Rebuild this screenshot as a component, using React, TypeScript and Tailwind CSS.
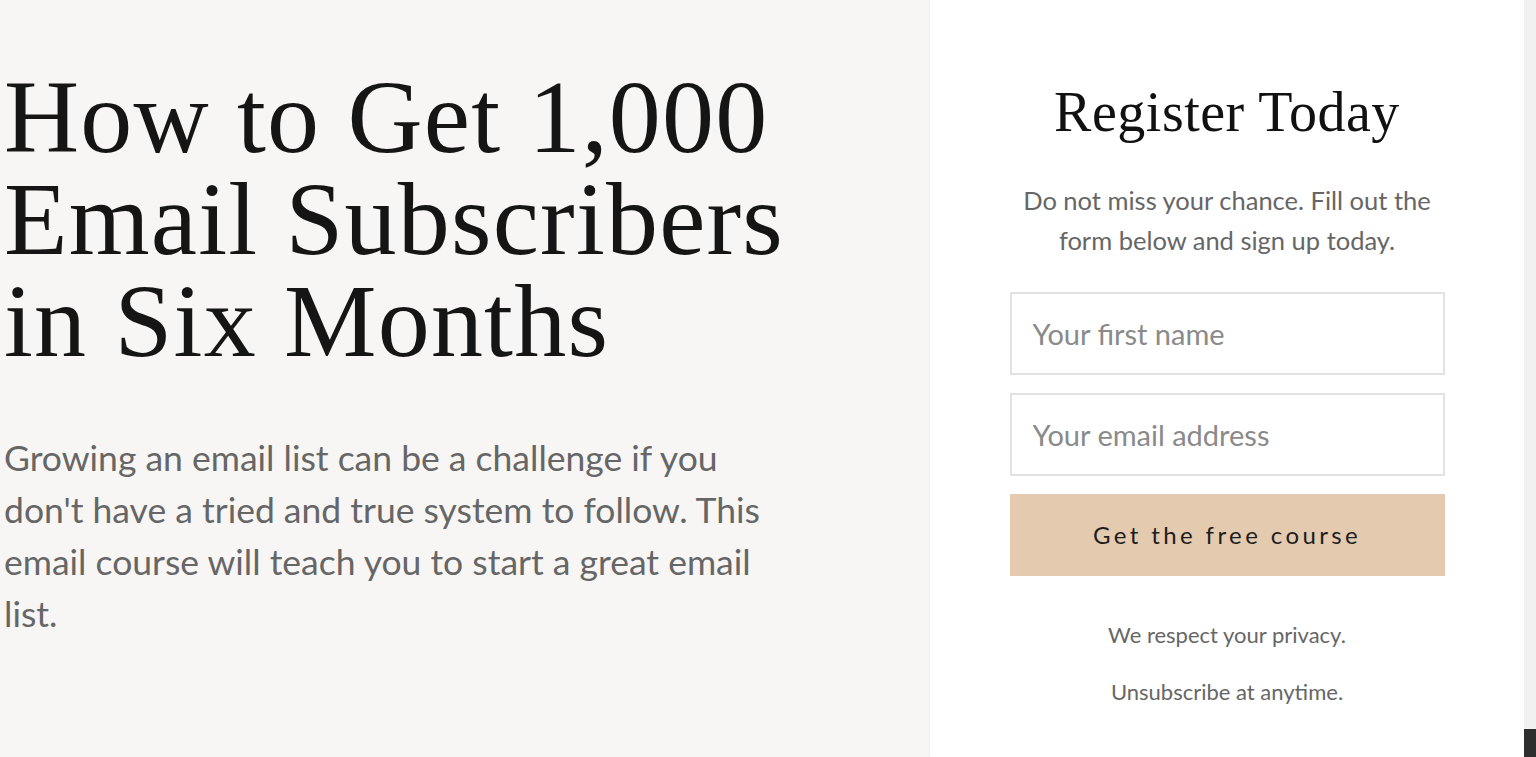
import React from "react";

const serif = { fontFamily: '"Liberation Serif", "Times New Roman", serif' };

export default function App() {
  return (
    <div className="flex h-[757px] w-[1536px] overflow-hidden bg-[#f7f6f4]" style={{ fontFamily: 'Lato, "Noto Sans", sans-serif' }}>
      <div className="flex-1 pl-[4px] pt-[66px]">
        <h1 className="text-[104px] leading-[102px] tracking-[1.2px] text-[#151515] font-normal" style={serif}>
          How to Get 1,000
          <br />
          Email Subscribers
          <br />
          in Six Months
        </h1>
        <p className="mt-[60px] w-[770px] text-[35.5px] leading-[52px] text-[#666666]">
          Growing an email list can be a challenge if you don't have a tried and true system to follow. This email course will teach you to start a great email list.
        </p>
      </div>
      <div className="flex w-[594px] flex-col items-center bg-white pt-[84px] shadow-[-1px_0_3px_rgba(0,0,0,0.04)]">
        <h2 className="text-[56px] leading-[56px] tracking-[0.5px] text-[#111111]" style={serif}>
          Register Today
        </h2>
        <p className="mt-[40px] w-[440px] text-center text-[25.5px] leading-[40px] text-[#666666]">
          Do not miss your chance. Fill out the form below and sign up today.
        </p>
        <div className="mt-[32px] flex w-[435px] flex-col gap-[18px]">
          <input
            className="h-[83px] w-full border-2 border-[#e2e2e2] bg-white px-[21px] text-[29px] text-[#555] outline-none placeholder:text-[#8a8a8a]"
            placeholder="Your first name"
          />
          <input
            className="h-[83px] w-full border-2 border-[#e2e2e2] bg-white px-[21px] text-[29px] text-[#555] outline-none placeholder:text-[#8a8a8a]"
            placeholder="Your email address"
          />
          <button className="h-[82px] w-full bg-[#e4cbb0] text-[24px] tracking-[3.4px] text-[#1e1e1e]">
            Get the free course
          </button>
        </div>
        <p className="mt-[45px] text-[22px] leading-[28px] text-[#666666]">We respect your privacy.</p>
        <p className="mt-[29px] text-[22px] leading-[28px] text-[#666666]">Unsubscribe at anytime.</p>
      </div>
      <div className="flex w-[12px] flex-col justify-end bg-[#f1f1f1]">
        <div className="h-[28px] bg-[#2e2e2e]" />
      </div>
    </div>
  );
}
